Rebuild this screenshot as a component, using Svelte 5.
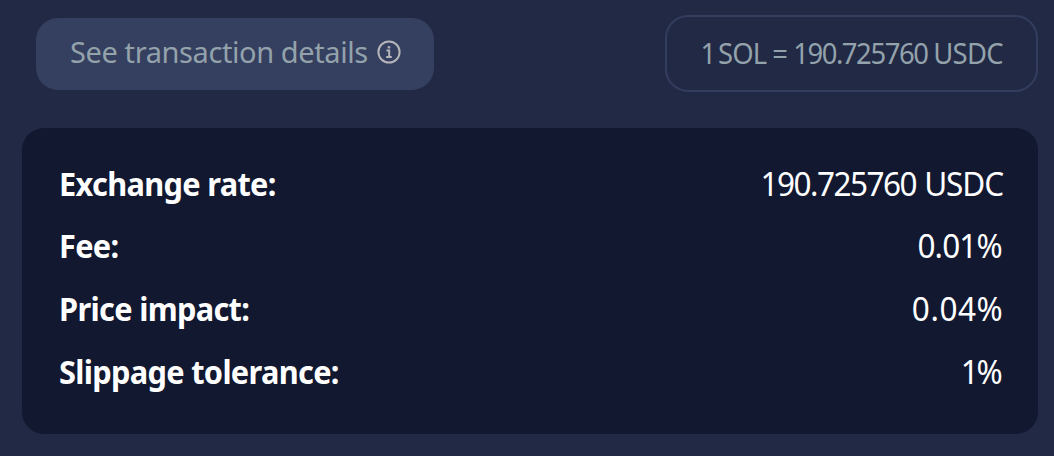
<script>
  const rows = [
    { label: 'Exchange rate:', amount: '190.725760', unit: 'USDC', tracking: -1.6 },
    { label: 'Fee:', amount: '0.01%', tracking: -0.9 },
    { label: 'Price impact:', amount: '0.04%', tracking: 0.6 },
    { label: 'Slippage tolerance:', amount: '1%', tracking: -2.4 },
  ];
</script>

<main class="swap">
  <header class="top">
    <button class="details">
      <span class="details-text">See transaction details</span>
      <svg class="info" viewBox="0 0 24 24" aria-hidden="true">
        <circle cx="12" cy="12" r="10.6" />
        <path d="M9.5 10.6h2.7v6.4M9.2 17h5.6" />
        <path class="dot" d="M10.7 6.2h2.5v2.2h-2.5z" />
      </svg>
    </button>
    <div class="rate">
      <span class="rate-text"><span class="one">1</span> SOL = <span class="digits">190.725760</span> USDC</span>
    </div>
  </header>

  <dl class="panel">
    {#each rows as row}
      <div class="row">
        <dt>{row.label}</dt>
        <dd><span style="letter-spacing: {row.tracking}px; margin-right: {row.unit ? 0 : -row.tracking}px">{row.amount}</span>{#if row.unit}{' '}<span class="unit">{row.unit}</span>{/if}</dd>
      </div>
    {/each}
  </dl>
</main>

<style>
  :global(body) {
    margin: 0;
    background: #212945;
  }
  .swap {
    box-sizing: border-box;
    height: 456px;
    padding: 15px 16px 0 22px;
    background: #212945;
    font-family: 'Noto Sans', sans-serif;
    overflow: hidden;
  }
  .top {
    display: flex;
    justify-content: space-between;
    align-items: center;
    height: 77px;
    padding-left: 14px;
  }
  .details {
    box-sizing: border-box;
    display: flex;
    align-items: center;
    justify-content: space-between;
    width: 397.5px;
    height: 72px;
    margin-top: 1px;
    padding: 0 33px 5px 34px;
    border: 0;
    border-radius: 22px;
    background: #353f5f;
    color: #93a2ab;
    font-family: inherit;
    white-space: nowrap;
  }
  .details-text {
    font-size: 29px;
    letter-spacing: -0.4px;
  }
  .info {
    width: 24px;
    height: 24px;
    fill: none;
    stroke: #b5b5ba;
    stroke-width: 2;
  }
  .info .dot {
    fill: #b5b5ba;
    stroke: none;
  }
  .rate {
    box-sizing: border-box;
    display: flex;
    align-items: center;
    justify-content: flex-end;
    width: 373px;
    height: 77px;
    padding: 0 33px 3px 0;
    border: 2px solid #333d5d;
    border-radius: 23px;
    color: #93a2ab;
    white-space: nowrap;
  }
  .rate-text {
    font-size: 29px;
    letter-spacing: -0.8px;
    word-spacing: -0.5px;
    transform: scaleX(0.945);
    transform-origin: right;
  }
  .one {
    letter-spacing: -4.5px;
  }
  .digits {
    letter-spacing: -1.5px;
  }
  .panel {
    box-sizing: border-box;
    height: 306px;
    margin: 35.5px 0 0;
    padding: 24px 35px 0 37px;
    border-radius: 22px;
    background: #111830;
    color: #fff;
  }
  .row {
    display: flex;
    justify-content: space-between;
    align-items: baseline;
    height: 62.7px;
    line-height: 62.7px;
    white-space: nowrap;
  }
  dt {
    font-size: 32px;
    font-weight: 700;
    letter-spacing: -0.7px;
    transform: scaleX(0.96);
    transform-origin: left;
  }
  dd {
    margin: 0;
    font-size: 33.5px;
    transform: scaleX(0.94);
    transform-origin: right;
  }
  .unit {
    margin-right: 0.6px;
    letter-spacing: -1.2px;
  }
</style>
